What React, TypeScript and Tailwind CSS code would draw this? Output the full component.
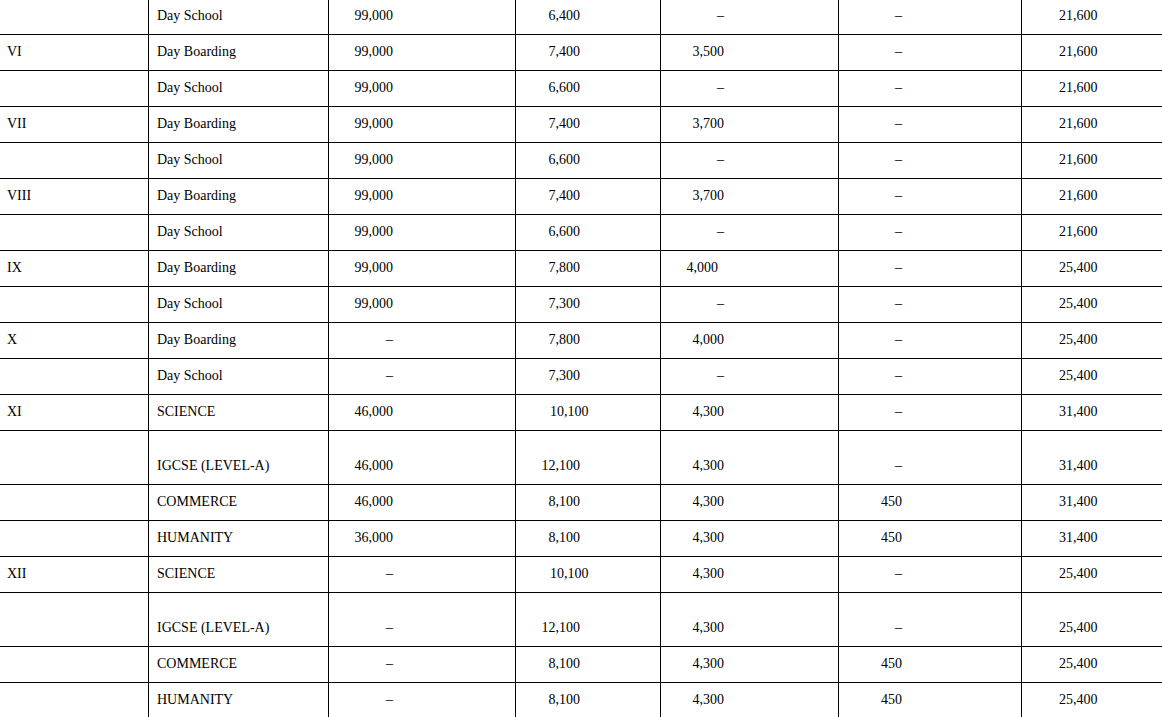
import React from "react";

type Row = {
  c1: string;
  c2: string;
  c3: string;
  c4: string;
  c5: string;
  c6: string;
  c7: string;
  tall?: boolean;
  c4Left?: boolean;
  c5Narrow?: boolean;
};

const D = "–";

const rows: Row[] = [
  { c1: "", c2: "Day School", c3: "99,000", c4: "6,400", c5: D, c6: D, c7: "21,600" },
  { c1: "VI", c2: "Day Boarding", c3: "99,000", c4: "7,400", c5: "3,500", c6: D, c7: "21,600" },
  { c1: "", c2: "Day School", c3: "99,000", c4: "6,600", c5: D, c6: D, c7: "21,600" },
  { c1: "VII", c2: "Day Boarding", c3: "99,000", c4: "7,400", c5: "3,700", c6: D, c7: "21,600" },
  { c1: "", c2: "Day School", c3: "99,000", c4: "6,600", c5: D, c6: D, c7: "21,600" },
  { c1: "VIII", c2: "Day Boarding", c3: "99,000", c4: "7,400", c5: "3,700", c6: D, c7: "21,600" },
  { c1: "", c2: "Day School", c3: "99,000", c4: "6,600", c5: D, c6: D, c7: "21,600" },
  { c1: "IX", c2: "Day Boarding", c3: "99,000", c4: "7,800", c5: "4,000", c6: D, c7: "25,400", c5Narrow: true },
  { c1: "", c2: "Day School", c3: "99,000", c4: "7,300", c5: D, c6: D, c7: "25,400" },
  { c1: "X", c2: "Day Boarding", c3: D, c4: "7,800", c5: "4,000", c6: D, c7: "25,400" },
  { c1: "", c2: "Day School", c3: D, c4: "7,300", c5: D, c6: D, c7: "25,400" },
  { c1: "XI", c2: "SCIENCE", c3: "46,000", c4: "10,100", c5: "4,300", c6: D, c7: "31,400", c4Left: true },
  { c1: "", c2: "IGCSE (LEVEL-A)", c3: "46,000", c4: "12,100", c5: "4,300", c6: D, c7: "31,400", tall: true },
  { c1: "", c2: "COMMERCE", c3: "46,000", c4: "8,100", c5: "4,300", c6: "450", c7: "31,400" },
  { c1: "", c2: "HUMANITY", c3: "36,000", c4: "8,100", c5: "4,300", c6: "450", c7: "31,400" },
  { c1: "XII", c2: "SCIENCE", c3: D, c4: "10,100", c5: "4,300", c6: D, c7: "25,400", c4Left: true },
  { c1: "", c2: "IGCSE (LEVEL-A)", c3: D, c4: "12,100", c5: "4,300", c6: D, c7: "25,400", tall: true },
  { c1: "", c2: "COMMERCE", c3: D, c4: "8,100", c5: "4,300", c6: "450", c7: "25,400" },
  { c1: "", c2: "HUMANITY", c3: D, c4: "8,100", c5: "4,300", c6: "450", c7: "25,400" },
];

export default function App() {
  return (
    <div
      className="w-[1162px] h-[717px] overflow-hidden bg-white text-black text-[14px] leading-none"
      style={{ fontFamily: '"Liberation Serif", "Times New Roman", serif' }}
    >
      <div className="mt-[-1px] grid grid-cols-[148px_180px_187px_145px_178px_183px_141px]">
        {rows.map((r, i) => {
          const h = r.tall
            ? "h-[54px] pt-[18px] pb-[1px] border-b border-black"
            : "h-[36px] pb-[1px] border-b border-black";
          const cell = `${h} flex items-center`;
          return (
            <React.Fragment key={i}>
              <div className={`${cell} pl-[7px]`}>{r.c1}</div>
              <div className={`${cell} border-l pl-[8px]`}>{r.c2}</div>
              <div className={`${cell} border-l justify-end pr-[122px]`}>{r.c3}</div>
              {r.c4Left ? (
                <div className={`${cell} border-l pl-[34px]`}>{r.c4}</div>
              ) : (
                <div className={`${cell} border-l justify-end pr-[80px]`}>{r.c4}</div>
              )}
              <div
                className={`${cell} border-l justify-end ${
                  r.c5Narrow ? "pr-[120px]" : "pr-[114px]"
                }`}
              >
                {r.c5}
              </div>
              <div className={`${cell} border-l justify-end pr-[119px]`}>{r.c6}</div>
              <div className={`${cell} border-l pl-[37px]`}>{r.c7}</div>
            </React.Fragment>
          );
        })}
      </div>
    </div>
  );
}
